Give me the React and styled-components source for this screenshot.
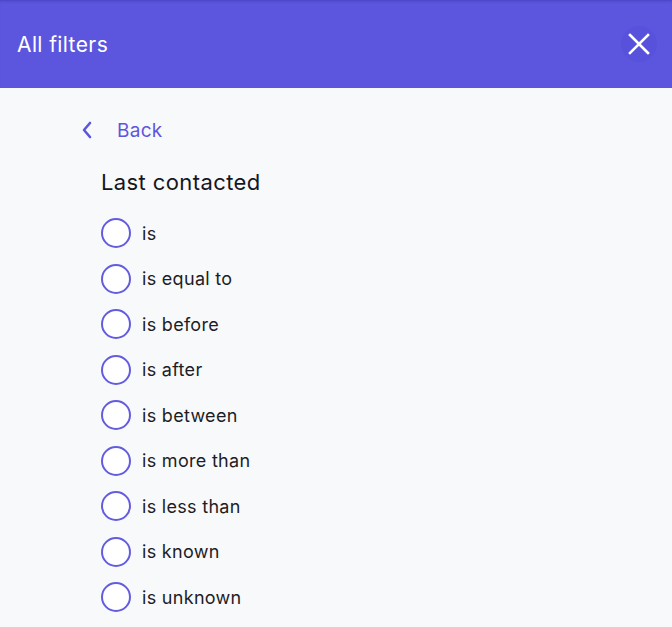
import styled, { createGlobalStyle } from "styled-components";

const Global = createGlobalStyle`
  body {
    margin: 0;
    background: #f8f9fb;
    font-family: Inter, "Noto Sans", sans-serif;
  }
`;

const Page = styled.div`
  width: 672px;
  min-height: 627px;
  background: #f8f9fb;
`;

const Header = styled.header`
  height: 88px;
  background: #5c56df;
  display: flex;
  align-items: center;
  justify-content: space-between;
  padding: 0 17px;
  box-sizing: border-box;
  box-shadow: inset 0 3px 3px -2px rgba(40, 30, 140, 0.35);
`;

const Title = styled.h1`
  margin: 0;
  font-size: 21px;
  font-weight: 400;
  color: #ffffff;
  letter-spacing: 0.4px;
`;

const CloseButton = styled.button`
  width: 36px;
  height: 36px;
  margin-right: -2px;
  border: none;
  border-radius: 50%;
  background: rgba(70, 62, 205, 0.18);
  display: flex;
  align-items: center;
  justify-content: center;
  padding: 0;
  cursor: pointer;
`;

const Body = styled.div`
  padding: 29px 0 0 80px;
  display: flex;
  flex-direction: column;
`;

const BackLink = styled.a`
  display: flex;
  align-items: center;
  gap: 21px;
  color: #5c56df;
  font-size: 19px;
  letter-spacing: 0.3px;
  height: 26px;
  cursor: pointer;
`;

const Heading = styled.h2`
  margin: 26px 0 23px 21px;
  font-size: 22px;
  font-weight: 400;
  color: #16161d;
  letter-spacing: 0.4px;
`;

const Options = styled.div`
  display: flex;
  flex-direction: column;
  gap: 15.5px;
  margin-left: 21px;
`;

const Option = styled.label`
  display: flex;
  align-items: center;
  gap: 11px;
  height: 30px;
  font-size: 18px;
  letter-spacing: 0.3px;
  color: #1d1d26;
  cursor: pointer;
`;

const Radio = styled.span`
  width: 30px;
  height: 30px;
  box-sizing: border-box;
  border-radius: 50%;
  border: 2.5px solid #635cdf;
  background: #ffffff;
`;

const options = [
  "is",
  "is equal to",
  "is before",
  "is after",
  "is between",
  "is more than",
  "is less than",
  "is known",
  "is unknown",
];

export default function App() {
  return (
    <Page>
      <Global />
      <Header>
        <Title>All filters</Title>
        <CloseButton aria-label="Close">
          <svg width="24" height="24" viewBox="0 0 24 24">
            <path d="M3 3 L21 21 M21 3 L3 21" stroke="#fff" strokeWidth="2.6" strokeLinecap="square" />
          </svg>
        </CloseButton>
      </Header>
      <Body>
        <BackLink>
          <svg width="16" height="18" viewBox="0 0 16 18">
            <path d="M10 2 L4 9 L10 16" stroke="#5c56df" strokeWidth="2.6" fill="none" strokeLinecap="round" strokeLinejoin="round" />
          </svg>
          Back
        </BackLink>
        <Heading>Last contacted</Heading>
        <Options>
          {options.map((o) => (
            <Option key={o}>
              <Radio />
              {o}
            </Option>
          ))}
        </Options>
      </Body>
    </Page>
  );
}
